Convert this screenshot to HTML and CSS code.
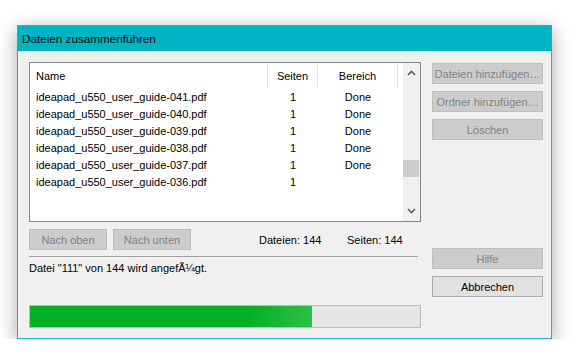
FILE: index.html
```html
<!DOCTYPE html>
<html lang="de">
<head>
    <meta charset="UTF-8">
    <title>Dateien zusammenführen</title>
    <link rel="stylesheet" href="styles.css">
</head>
<body>
    <div class="dialog">
        <div class="title-bar">Dateien zusammenführen</div>
        <div class="dialog-body">
            <div class="main-col">
                <div class="file-list">
                    <div class="list-area">
                        <div class="list-head">
                            <span class="col-name">Name</span>
                            <span class="col-pages">Seiten</span>
                            <span class="col-range">Bereich</span>
                            <span class="col-rest"></span>
                        </div>
                        <div class="list-row"><span class="col-name">ideapad_u550_user_guide-041.pdf</span><span class="col-pages">1</span><span class="col-range">Done</span></div>
                        <div class="list-row"><span class="col-name">ideapad_u550_user_guide-040.pdf</span><span class="col-pages">1</span><span class="col-range">Done</span></div>
                        <div class="list-row"><span class="col-name">ideapad_u550_user_guide-039.pdf</span><span class="col-pages">1</span><span class="col-range">Done</span></div>
                        <div class="list-row"><span class="col-name">ideapad_u550_user_guide-038.pdf</span><span class="col-pages">1</span><span class="col-range">Done</span></div>
                        <div class="list-row"><span class="col-name">ideapad_u550_user_guide-037.pdf</span><span class="col-pages">1</span><span class="col-range">Done</span></div>
                        <div class="list-row"><span class="col-name">ideapad_u550_user_guide-036.pdf</span><span class="col-pages">1</span><span class="col-range"></span></div>
                    </div>
                    <div class="scrollbar">
                        <svg class="arrow" width="9" height="6" viewBox="0 0 9 6"><path d="M1 5 L4.5 1.5 L8 5" fill="none" stroke="#606060" stroke-width="1.6"/></svg>
                        <div class="track">
                            <div class="thumb"></div>
                        </div>
                        <svg class="arrow" width="9" height="6" viewBox="0 0 9 6"><path d="M1 1 L4.5 4.5 L8 1" fill="none" stroke="#606060" stroke-width="1.6"/></svg>
                    </div>
                </div>

                <div class="list-tools">
                    <button class="btn" disabled>Nach oben</button>
                    <button class="btn" disabled>Nach unten</button>
                    <span class="count count-files">Dateien: 144</span>
                    <span class="count">Seiten: 144</span>
                </div>

                <div class="separator"></div>
                <div class="status">Datei "111" von 144 wird angefÃ¼gt.</div>

                <div class="progress">
                    <div class="progress-fill" style="width: 72.3%"></div>
                </div>
            </div>

            <div class="side-col">
                <button class="btn wide" disabled>Dateien hinzufügen…</button>
                <button class="btn wide" disabled>Ordner hinzufügen…</button>
                <button class="btn wide" disabled>Löschen</button>
                <button class="btn wide help" disabled>Hilfe</button>
                <button class="btn wide">Abbrechen</button>
            </div>
        </div>
    </div>
</body>
</html>
```

FILE: styles.css
```css
body {
    margin: 0;
    padding: 25px 0 0 17px;
    background: #ffffff;
    font-family: "Liberation Sans", Arial, sans-serif;
    font-size: 11px;
    color: #000;
}
.dialog {
    width: 535px; height: 314px;
    box-sizing: border-box;
    border: 1px solid #18b5c4;
    background: #f0f0f0;
    box-shadow: 0 5px 18px rgba(0, 0, 0, 0.35);
    display: flex; flex-direction: column;
}
.title-bar {
    height: 25px; flex: none;
    background: #00b4c3;
    padding-left: 4px;
    line-height: 25px;
    font-size: 11.7px;
}
.dialog-body {
    flex: 1;
    display: flex; gap: 11px;
    padding: 11px 8px 10px 11px;
}
.main-col { width: 392px; display: flex; flex-direction: column; }
.side-col {
    width: 111px;
    display: flex; flex-direction: column; gap: 7px;
    padding: 1px 0 31px;
}

/* list view */
.file-list {
    height: 160px; box-sizing: border-box;
    border: 1px solid #828790;
    background: #fff;
    display: flex;
}
.list-area { flex: 1; }
.list-head, .list-row { display: flex; }
.list-head { height: 25px; align-items: stretch; }
.list-head span {
    display: flex; align-items: center;
    border-right: 1px solid #e5e5e5;
    box-sizing: border-box;
}
.list-head .col-name { padding-left: 6px; }
.list-head .col-pages, .list-head .col-range { justify-content: center; }
.list-head .col-rest { border-right: none; }
.list-row { height: 17px; align-items: center; }
.col-name { width: 238px; padding-left: 6px; box-sizing: border-box; }
.col-pages { width: 50px; text-align: center; }
.col-range { width: 80px; text-align: center; }
.col-rest { flex: 1; }

.scrollbar {
    width: 17px;
    background: #f0f0f0;
    display: flex; flex-direction: column; align-items: center;
}
.scrollbar .arrow { flex: none; margin: 7px 0; }
.track { flex: 1; width: 100%; position: relative; }
.thumb {
    position: absolute; left: 0; right: 1px;
    top: 77px; height: 17px;
    background: #cdcdcd;
}

/* buttons */
.btn {
    height: 21px; padding: 0;
    font-family: inherit; font-size: 11px;
    white-space: nowrap;
    background: #e1e1e1; color: #000;
    border: 1px solid #adadad;
}
.btn:disabled { background: #cccccc; color: #838383; border-color: #bfbfbf; }
.btn.wide { width: 111px; flex: none; }
.btn.help { margin-top: auto; }

.list-tools {
    margin-top: 7px; height: 21px;
    display: flex; align-items: center; gap: 6px;
}
.list-tools .btn { width: 78px; }
.count { white-space: nowrap; }
.count-files { margin-left: 62px; width: 82px; }

.separator { margin-top: 6px; width: 389px; border-top: 1px solid #a0a0a0; }
.status { margin-top: 5px; line-height: 13px; }

.progress {
    margin-top: auto;
    height: 23px; box-sizing: border-box;
    border: 1px solid #bcbcbc;
    background: #e6e6e6;
}
.progress-fill {
    height: 100%;
    background: linear-gradient(90deg, #06b025 0%, #06b025 78%, #2cc04a 100%);
}
```
